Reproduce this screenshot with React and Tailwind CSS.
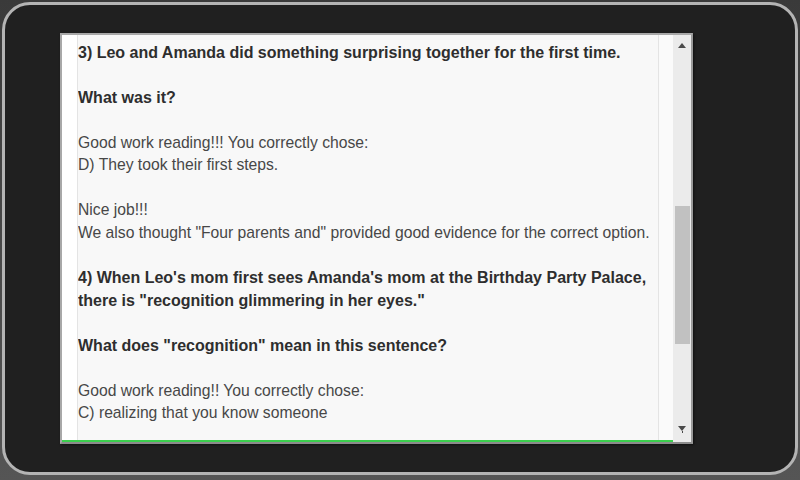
import React from 'react';

const bold = 'font-bold text-[#2e2e2e] text-[16px]';
const reg = 'text-[#474747] text-[15.7px]';

const lines = [
  { t: '3) Leo and Amanda did something surprising together for the first time.', b: true },
  { t: '' },
  { t: 'What was it?', b: true },
  { t: '' },
  { t: 'Good work reading!!! You correctly chose:' },
  { t: 'D) They took their first steps.' },
  { t: '' },
  { t: 'Nice job!!!' },
  { t: 'We also thought "Four parents and" provided good evidence for the correct option.' },
  { t: '' },
  { t: "4) When Leo's mom first sees Amanda's mom at the Birthday Party Palace,", b: true },
  { t: 'there is "recognition glimmering in her eyes."', b: true },
  { t: '' },
  { t: 'What does "recognition" mean in this sentence?', b: true },
  { t: '' },
  { t: 'Good work reading!! You correctly chose:' },
  { t: 'C) realizing that you know someone' },
  { t: '' },
];

const App = () => {
  return (
    <div className="w-[800px] h-[480px] bg-gradient-to-b from-[#3a3a3a] to-[#555] overflow-hidden">
      <div
        className="ml-[2px] mt-[2px] w-[796px] h-[473px] rounded-[28px] border-[3px] border-[#b4b4b4] bg-[#202020] pt-[28px] pl-[55px]"
        style={{ fontFamily: '"Liberation Sans", Arial, sans-serif' }}
      >
        {/* Reading panel */}
        <div className="w-[633px] h-[411px] flex border-t-2 border-l-2 border-[#a8a8a8] border-r-2 border-r-[#9a9a9a] border-b-2 border-b-[#8c8c8c] bg-white shadow-[1px_1px_2px_rgba(0,0,0,0.5)]">
          <div className="flex-1 flex flex-col">
            <div className="flex-1 flex overflow-hidden">
              <div className="w-[15px] bg-white" />
              <div className="flex-1 bg-[#f8f8f8] border-l border-r border-[#e4e4e4] overflow-hidden pt-[6.5px]">
                {lines.map((l, i) => (
                  <div
                    key={i}
                    className={`h-[22.55px] leading-[22.55px] whitespace-nowrap ${l.b ? bold : reg}`}
                  >
                    {l.t || '\u00a0'}
                  </div>
                ))}
              </div>
              <div className="w-[14px] bg-[#fafafa]" />
            </div>
            <div className="h-[2px] bg-[#3ccf4e]" />
          </div>

          {/* Scrollbar */}
          <div className="w-[18px] bg-[#ebebeb] flex flex-col items-center">
            <div className="h-[20px] flex items-center justify-center">
              <div className="w-0 h-0 border-x-[4px] border-x-transparent border-b-[5px] border-b-[#4a4a4a]" />
            </div>
            <div className="mt-[151px] h-[138px] w-[15px] ml-[1px] bg-[#c1c1c1]" />
            <div className="flex-1" />
            <div className="h-[22px] flex flex-col items-center justify-center pb-[4px]">
              <div className="w-0 h-0 border-x-[4px] border-x-transparent border-t-[5px] border-t-[#4a4a4a]" />
              <div className="w-[1px] h-[2px] bg-[#4a4a4a]" />
            </div>
          </div>
        </div>
      </div>
    </div>
  );
};

export default App;
